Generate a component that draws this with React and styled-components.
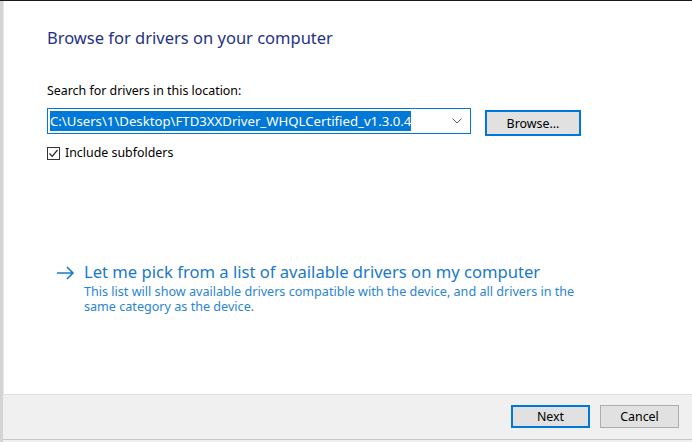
import React, { useState } from "react";
import styled, { createGlobalStyle } from "styled-components";

const GlobalStyle = createGlobalStyle`
  html, body {
    margin: 0;
    padding: 0;
    background: #ffffff;
  }
  body {
    font-family: "Noto Sans", "Liberation Sans", sans-serif;
    overflow: hidden;
  }
`;

const Screen = styled.div`
  width: 692px;
  height: 442px;
  display: flex;
  flex-direction: column;
  background: #ffffff;
`;

const TopEdge = styled.div`
  height: 1px;
  background: #1a1a1a;
`;

const Window = styled.div`
  flex: 1;
  display: flex;
  flex-direction: column;
  border-left: 3px solid #d4d4d4;
  box-shadow: inset 1px 0 0 #e8e8e8;
`;

const Body = styled.div`
  flex: 1;
  padding: 26px 0 0 44px;
  display: flex;
  flex-direction: column;
`;

const Title = styled.h1`
  margin: 0;
  font-size: 16.5px;
  font-weight: 400;
  color: #1e3287;
  line-height: 22px;
`;

const FieldLabel = styled.div`
  margin-top: 34px;
  font-size: 12.4px;
  color: #000;
  line-height: 16px;
`;

const FieldRow = styled.div`
  margin-top: 9px;
  display: flex;
  align-items: flex-start;
  gap: 14px;
`;

const Combo = styled.div`
  width: 424px;
  height: 26px;
  box-sizing: border-box;
  border: 1px solid #0078d7;
  display: flex;
  align-items: center;
  padding: 0 2px;
  background: #fff;
`;

const ComboText = styled.span`
  flex: 1;
  font-size: 13.2px;
  line-height: 17px;
  white-space: nowrap;
`;

const Selected = styled.span`
  background: #0078d7;
  color: #fff;
  padding: 1px 0;
`;

const Chevron = styled.svg`
  width: 10px;
  height: 6px;
  margin: 0 6px 0 4px;
`;

const Button = styled.button`
  width: ${(p) => p.width || 79}px;
  height: ${(p) => p.height || 23}px;
  margin-top: ${(p) => p.offset || 0}px;
  box-sizing: border-box;
  background: #e1e1e1;
  border: ${(p) => (p.focused ? "2px solid #0078d7" : "1px solid #adadad")};
  font-family: inherit;
  font-size: 12.4px;
  color: #000;
  padding: 0;
  cursor: pointer;
`;

const CheckRow = styled.label`
  margin-top: 9px;
  display: flex;
  align-items: center;
  gap: 5px;
  font-size: 12.4px;
  color: #000;
  line-height: 16px;
`;

const Box = styled.span`
  width: 13px;
  height: 13px;
  box-sizing: border-box;
  border: 1px solid #333;
  background: #fff;
  display: flex;
  align-items: center;
  justify-content: center;
`;

const Option = styled.div`
  margin-top: 100px;
  margin-left: 9px;
  display: flex;
  align-items: flex-start;
  gap: 9px;
  cursor: pointer;
`;

const Arrow = styled.svg`
  width: 19px;
  height: 14px;
  margin-top: 5px;
`;

const OptionText = styled.div`
  display: flex;
  flex-direction: column;
`;

const OptionTitle = styled.div`
  font-size: 16.6px;
  line-height: 22px;
  color: #1979ca;
`;

const OptionDesc = styled.div`
  font-size: 12.6px;
  line-height: 15px;
  color: #2a84d2;
  width: 510px;
  margin-top: 1px;
`;

const Footer = styled.div`
  height: 45px;
  box-sizing: border-box;
  background: #f0f0f0;
  border-top: 1px solid #dfdfdf;
  display: flex;
  justify-content: flex-end;
  align-items: flex-start;
  padding: 10px 13px 0 0;
  gap: 10px;
`;

const BottomEdge = styled.div`
  height: 2px;
  background: #f0f0f0;
  border-top: 1px solid #c8c8c8;
`;

export default function App() {
  const [checked, setChecked] = useState(true);
  return (
    <Screen>
      <GlobalStyle />
      <TopEdge />
      <Window>
        <Body>
          <Title>Browse for drivers on your computer</Title>
          <FieldLabel>Search for drivers in this location:</FieldLabel>
          <FieldRow>
            <Combo>
              <ComboText>
                <Selected>C:\Users\1\Desktop\FTD3XXDriver_WHQLCertified_v1.3.0.4</Selected>
              </ComboText>
              <Chevron viewBox="0 0 10 6">
                <path d="M0.5 0.5 L5 5 L9.5 0.5" fill="none" stroke="#555" strokeWidth="1" />
              </Chevron>
            </Combo>
            <Button width={96} height={26} offset={2} focused>
              Browse...
            </Button>
          </FieldRow>
          <CheckRow onClick={() => setChecked(!checked)}>
            <Box>
              {checked && (
                <svg width="11" height="11" viewBox="0 0 11 11">
                  <path d="M1.5 5.5 L4.2 8.3 L9.5 2" fill="none" stroke="#222" strokeWidth="1.2" />
                </svg>
              )}
            </Box>
            Include subfolders
          </CheckRow>
          <Option>
            <Arrow viewBox="0 0 19 14">
              <path d="M1 7 H17 M11 1 L17 7 L11 13" fill="none" stroke="#1979ca" strokeWidth="1.6" />
            </Arrow>
            <OptionText>
              <OptionTitle>Let me pick from a list of available drivers on my computer</OptionTitle>
              <OptionDesc>
                This list will show available drivers compatible with the device, and all drivers in the
                same category as the device.
              </OptionDesc>
            </OptionText>
          </Option>
        </Body>
        <Footer>
          <Button focused>Next</Button>
          <Button>Cancel</Button>
        </Footer>
        <BottomEdge />
      </Window>
    </Screen>
  );
}
